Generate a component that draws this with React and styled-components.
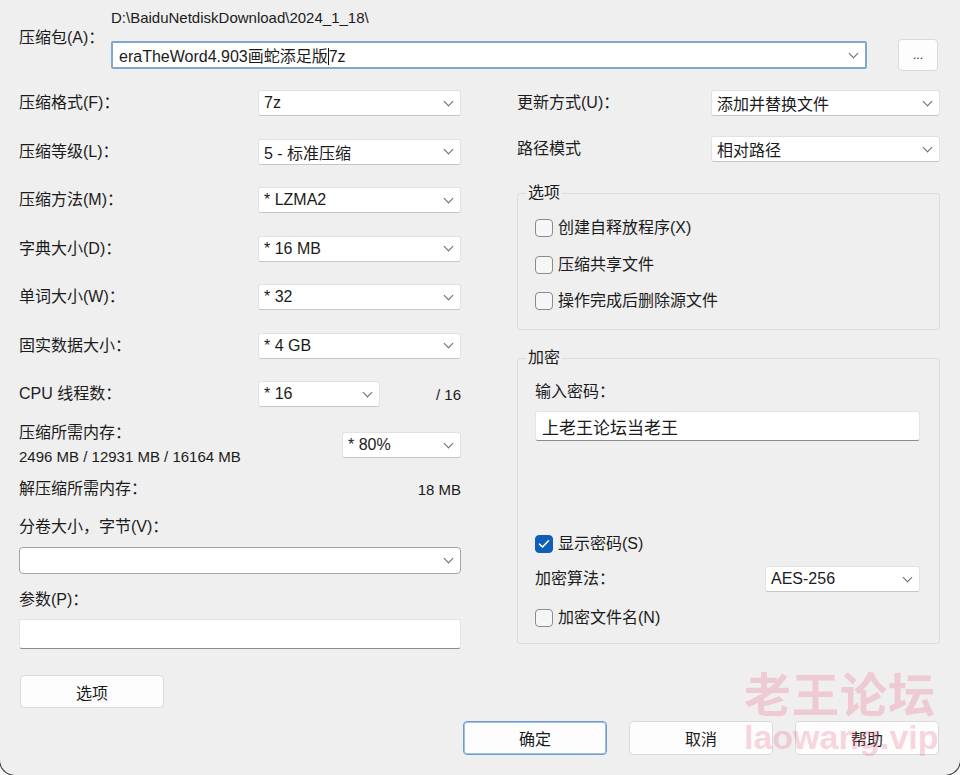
import React from "react";
import styled, { createGlobalStyle } from "styled-components";

const GlobalStyle = createGlobalStyle`
  html, body {
    margin: 0;
    padding: 0;
    background: #efefef;
  }
  body {
    font-family: "Liberation Sans", "Noto Sans CJK SC", sans-serif;
  }
  * {
    box-sizing: border-box;
  }
`;

const Dialog = styled.div`
  position: relative;
  width: 960px;
  height: 775px;
  overflow: hidden;
  background: #efefef;
  color: #1b1b1b;
  font-size: 16px;
  padding: 8px 20px 0 19px;

  /* rounded window corners peeking in at the bottom */
  &::before,
  &::after {
    content: "";
    position: absolute;
    bottom: -1px;
    width: 16px;
    height: 16px;
    border-bottom: 1.5px solid #3a3a3a;
    background: #f7f7f7;
  }
  &::before {
    left: -1px;
    border-left: 1.5px solid #3a3a3a;
    border-bottom-left-radius: 16px;
    box-shadow: -10px 10px 0 10px #f7f7f7;
    background: transparent;
  }
  &::after {
    right: -1px;
    border-right: 1.5px solid #3a3a3a;
    border-bottom-right-radius: 16px;
    box-shadow: 10px 10px 0 10px #f7f7f7;
    background: transparent;
  }
`;

const ArchiveRow = styled.div`
  display: flex;
  align-items: flex-start;
  margin-right: 2px;
`;

const ArchiveLabel = styled.div`
  width: 92px;
  padding-top: 20px;
  line-height: 20px;
`;

const PathColumn = styled.div`
  flex: 1;
  display: flex;
  flex-direction: column;
`;

const PathText = styled.div`
  line-height: 20px;
  font-size: 15px;
`;

const Select = styled.div`
  width: ${(p) => (p.$w ? `${p.$w}px` : "100%")};
  height: ${(p) => p.$h || 26}px;
  margin-top: ${(p) => p.$mt || 0}px;
  flex-shrink: 0;
  display: flex;
  align-items: center;
  justify-content: space-between;
  padding: 0 8px 0 5px;
  background: #fff;
  border: 1px solid #e2e2e2;
  border-bottom-color: #c6c6c6;
  border-radius: 3px;
  font-size: 16px;
  white-space: nowrap;

  ${(p) =>
    p.$focus &&
    `
    border: 2px solid #7fa8cf;
    border-radius: 2px;
    padding-left: 6px;
  `}
  ${(p) =>
    p.$outlined &&
    `
    border: 1.5px solid #a4a4a4;
    border-radius: 4px;
  `}
`;

const Caret = styled.span`
  display: inline-block;
  width: 7px;
  height: 7px;
  border-right: 1px solid #6a6a6a;
  border-bottom: 1px solid #6a6a6a;
  transform: translateY(-2px) rotate(45deg);
  margin-left: 8px;
`;

const Cursor = styled.span`
  display: inline-block;
  width: 1px;
  height: 17px;
  background: #111;
  vertical-align: -3px;
`;

const Button = styled.div`
  width: ${(p) => p.$w || 144}px;
  height: ${(p) => p.$h || 34}px;
  margin-top: ${(p) => p.$mt || 0}px;
  margin-left: ${(p) => p.$ml || 0}px;
  flex-shrink: 0;
  display: flex;
  align-items: center;
  justify-content: center;
  background: #fdfdfd;
  border: 1px solid ${(p) => (p.$primary ? "#6f9ccc" : "#dadada")};
  ${(p) => p.$primary && "box-shadow: inset 0 0 0 1px #9fc0e0;"}
  border-radius: 4px;
  font-size: ${(p) => p.$fs || 16}px;
  color: #1b1b1b;
`;

const Body = styled.div`
  display: grid;
  grid-template-columns: 442px 423px;
  column-gap: 56px;
  margin-top: 19px;
`;

const Column = styled.div`
  display: flex;
  flex-direction: column;
`;

const FieldRow = styled.div`
  display: flex;
  align-items: center;
  justify-content: space-between;
  height: ${(p) => p.$h || 26}px;
  margin-top: ${(p) => p.$mt || 0}px;
`;

const Label = styled.div`
  line-height: 20px;
  margin-top: ${(p) => p.$mt || 0}px;
  ${(p) => p.$w && `width: ${p.$w}px; flex-shrink: 0;`}
`;

const SubText = styled.div`
  font-size: 15px;
  line-height: 20px;
  margin-top: 4px;
`;

const Value = styled.div`
  flex: 1;
  text-align: right;
  font-size: 15px;
`;

const TextInput = styled.div`
  height: 30px;
  margin-top: ${(p) => p.$mt || 0}px;
  background: #fff;
  border: 1px solid #e4e4e4;
  border-bottom: 1.5px solid #8c8c8c;
  border-radius: 3px;
  display: flex;
  align-items: center;
  padding-left: 6px;
  font-size: 17px;
`;

const Group = styled.fieldset`
  margin: ${(p) => p.$mt || 0}px 0 0 0;
  padding: ${(p) => p.$pt || 0}px 19px ${(p) => p.$pb || 0}px 17px;
  border: 1px solid #dcdcdc;
  border-radius: 3px;
  min-width: 0;
  display: flex;
  flex-direction: column;
`;

const Legend = styled.legend`
  margin-left: -9px;
  padding: 0 2px;
  line-height: 20px;
  font-size: 16px;
`;

const CheckRow = styled.label`
  display: flex;
  align-items: center;
  gap: 5px;
  line-height: 20px;
  margin-top: ${(p) => p.$mt || 0}px;
`;

const Box = styled.span`
  width: 18px;
  height: 18px;
  border-radius: 4px;
  flex-shrink: 0;
  display: flex;
  align-items: center;
  justify-content: center;
  border: 1px solid ${(p) => (p.$checked ? "#0d5fb8" : "#8b8b8b")};
  background: ${(p) => (p.$checked ? "#0d5fb8" : "#f6f6f6")};
`;

const Footer = styled.div`
  display: flex;
  justify-content: flex-end;
  gap: 22px;
  margin-top: 13px;
  margin-right: 1px;
`;

const Watermark = styled.div`
  position: absolute;
  left: 744px;
  top: 668px;
  color: rgba(238, 110, 138, 0.3);
  font-weight: bold;
  pointer-events: none;
  line-height: 1;
`;

const WatermarkCn = styled.div`
  font-family: "Noto Sans CJK SC", sans-serif;
  font-size: 47px;
  letter-spacing: 1px;
`;

const WatermarkEn = styled.div`
  font-family: "Liberation Sans", sans-serif;
  font-size: 34px;
  margin-top: 5px;
`;

const Check = () => (
  <svg width="12" height="10" viewBox="0 0 12 10">
    <path
      d="M1.5 5.2 L4.5 8 L10.5 1.8"
      fill="none"
      stroke="#fff"
      strokeWidth="1.6"
      strokeLinecap="round"
      strokeLinejoin="round"
    />
  </svg>
);

const Combo = ({ children, ...rest }) => (
  <Select {...rest}>
    <span>{children}</span>
    <Caret />
  </Select>
);

const CheckBox = ({ checked, children, mt }) => (
  <CheckRow $mt={mt}>
    <Box $checked={checked}>{checked && <Check />}</Box>
    {children}
  </CheckRow>
);

const leftFields = [
  ["压缩格式(F)：", "7z"],
  ["压缩等级(L)：", "5 - 标准压缩"],
  ["压缩方法(M)：", "* LZMA2"],
  ["字典大小(D)：", "* 16 MB"],
  ["单词大小(W)：", "* 32"],
  ["固实数据大小：", "* 4 GB"],
];

export default function App() {
  return (
    <>
      <GlobalStyle />
      <Dialog>
        <ArchiveRow>
          <ArchiveLabel>压缩包(A)：</ArchiveLabel>
          <PathColumn>
            <PathText>D:\BaiduNetdiskDownload\2024_1_18\</PathText>
            <Select $focus $h={28} $mt={13}>
              <span>
                eraTheWord4.903画蛇添足版
                <Cursor />
                7z
              </span>
              <Caret />
            </Select>
          </PathColumn>
          <Button $w={40} $h={32} $mt={31} $ml={31} $fs={12}>
            ...
          </Button>
        </ArchiveRow>

        <Body>
          <Column>
            {leftFields.map(([label, value], i) => (
              <FieldRow key={label} $mt={i === 0 ? 0 : 22.5}>
                <Label>{label}</Label>
                <Combo $w={203}>{value}</Combo>
              </FieldRow>
            ))}
            <FieldRow $mt={22.5}>
              <Label $w={239}>CPU 线程数：</Label>
              <Combo $w={122}>* 16</Combo>
              <Value>/ 16</Value>
            </FieldRow>
            <FieldRow $mt={16} $h={44}>
              <div>
                <Label>压缩所需内存：</Label>
                <SubText>2496 MB / 12931 MB / 16164 MB</SubText>
              </div>
              <Combo $w={119}>* 80%</Combo>
            </FieldRow>
            <FieldRow $mt={12} $h={20}>
              <Label>解压缩所需内存：</Label>
              <Value>18 MB</Value>
            </FieldRow>
            <Label $mt={18}>分卷大小，字节(V)：</Label>
            <Select $outlined $h={27} $mt={10}>
              <span />
              <Caret />
            </Select>
            <Label $mt={16}>参数(P)：</Label>
            <TextInput $mt={9} />
            <Button $mt={26} $ml={1} $h={33}>
              选项
            </Button>
          </Column>

          <Column>
            <FieldRow>
              <Label>更新方式(U)：</Label>
              <Combo $w={229}>添加并替换文件</Combo>
            </FieldRow>
            <FieldRow $mt={20}>
              <Label>路径模式</Label>
              <Combo $w={229}>相对路径</Combo>
            </FieldRow>

            <Group $mt={21} $pt={15} $pb={18}>
              <Legend>选项</Legend>
              <CheckBox>创建自释放程序(X)</CheckBox>
              <CheckBox mt={16.5}>压缩共享文件</CheckBox>
              <CheckBox mt={16.5}>操作完成后删除源文件</CheckBox>
            </Group>

            <Group $mt={18} $pt={14} $pb={15}>
              <Legend>加密</Legend>
              <Label>输入密码：</Label>
              <TextInput $mt={9}>上老王论坛当老王</TextInput>
              <CheckBox checked mt={93}>
                显示密码(S)
              </CheckBox>
              <FieldRow $mt={12}>
                <Label>加密算法：</Label>
                <Combo $w={155}>AES-256</Combo>
              </FieldRow>
              <CheckBox mt={16}>加密文件名(N)</CheckBox>
            </Group>
          </Column>
        </Body>

        <Footer>
          <Button $primary>确定</Button>
          <Button>取消</Button>
          <Button>帮助</Button>
        </Footer>

        <Watermark>
          <WatermarkCn>老王论坛</WatermarkCn>
          <WatermarkEn>laowang.vip</WatermarkEn>
        </Watermark>
      </Dialog>
    </>
  );
}
